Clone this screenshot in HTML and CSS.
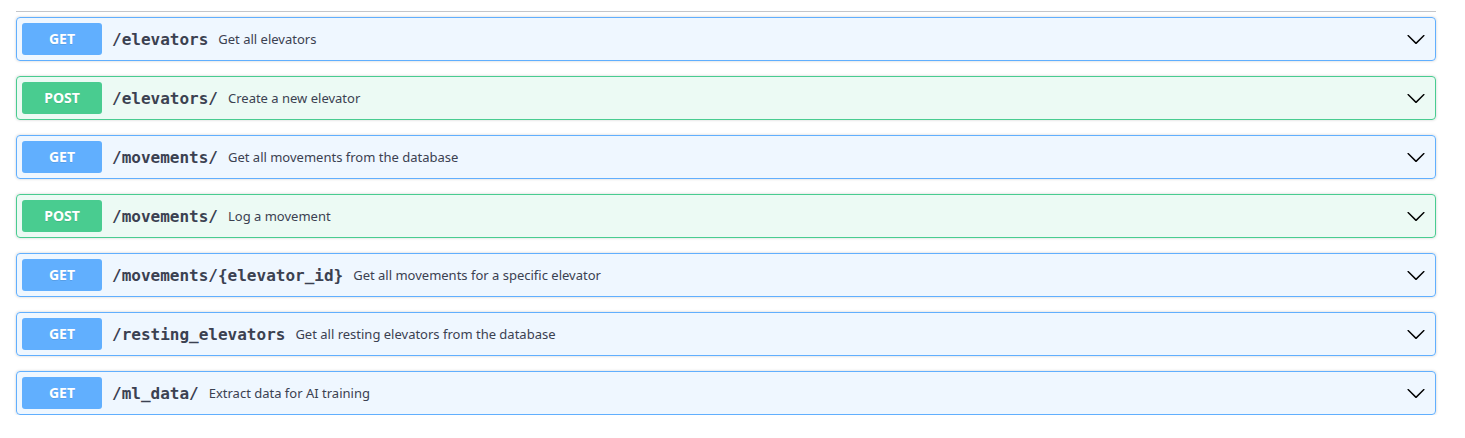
FILE: index.html
```html
<!DOCTYPE html>
<html>
<head>
<meta charset="utf-8">
<link rel="stylesheet" href="styles.css">
</head>
<body>
<div class="wrapper">
  <div class="divider"></div>
  <div class="ops">
    <div class="opblock get">
      <span class="method">GET</span>
      <span class="path">/elevators</span>
      <span class="desc">Get all elevators</span>
      <svg class="arrow" width="20" height="20" viewBox="0 0 20 20"><path d="M17.418 6.109c.272-.268.709-.268.979 0s.271.701 0 .969l-7.908 7.83c-.27.268-.707.268-.979 0l-7.908-7.83c-.27-.268-.27-.701 0-.969.271-.268.709-.268.979 0L10 13.25l7.418-7.141z"/></svg>
    </div>
    <div class="opblock post">
      <span class="method">POST</span>
      <span class="path">/elevators/</span>
      <span class="desc">Create a new elevator</span>
      <svg class="arrow" width="20" height="20" viewBox="0 0 20 20"><path d="M17.418 6.109c.272-.268.709-.268.979 0s.271.701 0 .969l-7.908 7.83c-.27.268-.707.268-.979 0l-7.908-7.83c-.27-.268-.27-.701 0-.969.271-.268.709-.268.979 0L10 13.25l7.418-7.141z"/></svg>
    </div>
    <div class="opblock get">
      <span class="method">GET</span>
      <span class="path">/movements/</span>
      <span class="desc">Get all movements from the database</span>
      <svg class="arrow" width="20" height="20" viewBox="0 0 20 20"><path d="M17.418 6.109c.272-.268.709-.268.979 0s.271.701 0 .969l-7.908 7.83c-.27.268-.707.268-.979 0l-7.908-7.83c-.27-.268-.27-.701 0-.969.271-.268.709-.268.979 0L10 13.25l7.418-7.141z"/></svg>
    </div>
    <div class="opblock post">
      <span class="method">POST</span>
      <span class="path">/movements/</span>
      <span class="desc">Log a movement</span>
      <svg class="arrow" width="20" height="20" viewBox="0 0 20 20"><path d="M17.418 6.109c.272-.268.709-.268.979 0s.271.701 0 .969l-7.908 7.83c-.27.268-.707.268-.979 0l-7.908-7.83c-.27-.268-.27-.701 0-.969.271-.268.709-.268.979 0L10 13.25l7.418-7.141z"/></svg>
    </div>
    <div class="opblock get">
      <span class="method">GET</span>
      <span class="path">/movements/{elevator_id}</span>
      <span class="desc">Get all movements for a specific elevator</span>
      <svg class="arrow" width="20" height="20" viewBox="0 0 20 20"><path d="M17.418 6.109c.272-.268.709-.268.979 0s.271.701 0 .969l-7.908 7.83c-.27.268-.707.268-.979 0l-7.908-7.83c-.27-.268-.27-.701 0-.969.271-.268.709-.268.979 0L10 13.25l7.418-7.141z"/></svg>
    </div>
    <div class="opblock get">
      <span class="method">GET</span>
      <span class="path">/resting_elevators</span>
      <span class="desc">Get all resting elevators from the database</span>
      <svg class="arrow" width="20" height="20" viewBox="0 0 20 20"><path d="M17.418 6.109c.272-.268.709-.268.979 0s.271.701 0 .969l-7.908 7.83c-.27.268-.707.268-.979 0l-7.908-7.83c-.27-.268-.27-.701 0-.969.271-.268.709-.268.979 0L10 13.25l7.418-7.141z"/></svg>
    </div>
    <div class="opblock get">
      <span class="method">GET</span>
      <span class="path">/ml_data/</span>
      <span class="desc">Extract data for AI training</span>
      <svg class="arrow" width="20" height="20" viewBox="0 0 20 20"><path d="M17.418 6.109c.272-.268.709-.268.979 0s.271.701 0 .969l-7.908 7.83c-.27.268-.707.268-.979 0l-7.908-7.83c-.27-.268-.27-.701 0-.969.271-.268.709-.268.979 0L10 13.25l7.418-7.141z"/></svg>
    </div>
  </div>
</div>
</body>
</html>
```

FILE: styles.css
```css
html, body {
  margin: 0;
  padding: 0;
  background: #fff;
}
body {
  font-family: "Noto Sans", "Open Sans", sans-serif;
  color: #3b4151;
}
.wrapper {
  padding: 11px 29px 0 16px;
}
.divider {
  height: 1px;
  background: rgba(59, 65, 81, 0.3);
  margin-bottom: 5px;
}
.ops {
  display: flex;
  flex-direction: column;
  gap: 15px;
}
.opblock {
  display: flex;
  align-items: center;
  padding: 5px 9px 5px 5px;
  border: 1px solid #61affe;
  border-radius: 4px;
  box-shadow: 0 0 3px rgba(0, 0, 0, 0.19);
  background: rgba(97, 175, 254, 0.1);
}
.opblock.post {
  border-color: #49cc90;
  background: rgba(73, 204, 144, 0.1);
}
.method {
  min-width: 80px;
  padding: 6px 0;
  font-size: 14px;
  line-height: 20px;
  font-weight: 700;
  text-align: center;
  color: #fff;
  border-radius: 3px;
  background: #61affe;
  text-shadow: 0 1px 0 rgba(0, 0, 0, 0.1);
}
.opblock.post .method {
  background: #49cc90;
}
.path {
  padding: 0 10px;
  font-family: "DejaVu Sans Mono", monospace;
  font-size: 16px;
  font-weight: 700;
  color: #3b4151;
}
.desc {
  flex: 1;
  font-size: 13px;
  color: #3b4151;
}
.arrow {
  flex: none;
  fill: #000;
}
```
